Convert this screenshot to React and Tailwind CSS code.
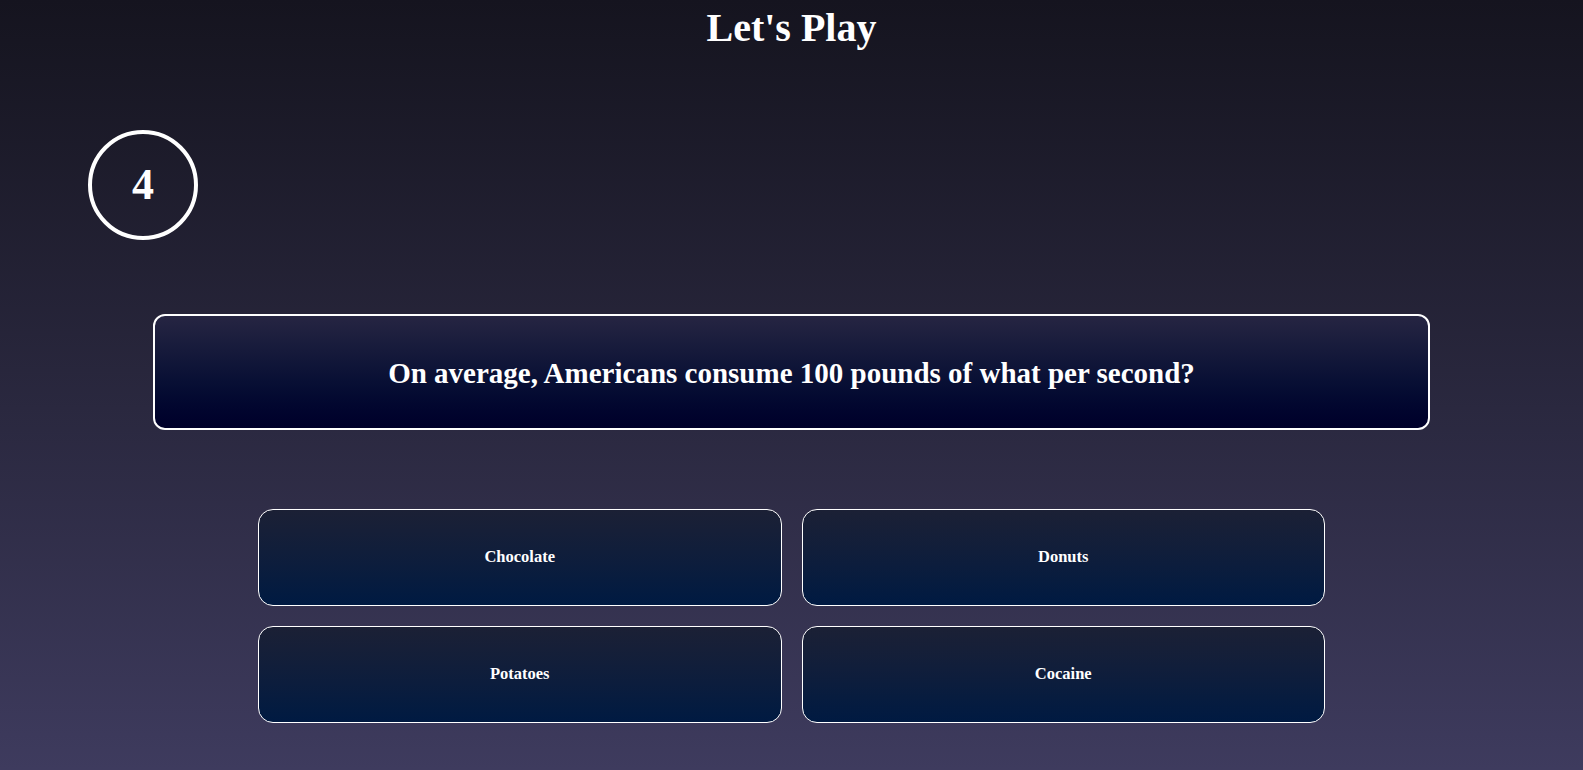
export default function App() {
  const answers = ["Chocolate", "Donuts", "Potatoes", "Cocaine"];
  return (
    <div
      className="min-h-screen w-full bg-gradient-to-b from-[#15141f] to-[#3e3b5e] text-white"
      style={{ fontFamily: '"Liberation Serif", "Times New Roman", serif' }}
    >
      <h1 className="text-center text-[40px] font-bold leading-[44px] pt-[6px]">Let's Play</h1>
      <div className="pl-[88px] pt-[80px]">
        <div className="w-[110px] h-[110px] rounded-full border-4 border-white flex items-center justify-center">
          <span className="text-[44px] font-bold leading-none">4</span>
        </div>
      </div>
      <div className="mx-[153px] mt-[74px] h-[116px] rounded-[12px] border-2 border-white bg-gradient-to-b from-[#262542] to-[#00002a] flex items-center justify-center">
        <h2 className="text-[29px] font-bold leading-none pt-[2px]">
          On average, Americans consume 100 pounds of what per second?
        </h2>
      </div>
      <div className="mx-auto mt-[79px] w-[1067px] grid grid-cols-2 gap-x-[20px] gap-y-[20px]">
        {answers.map((a) => (
          <button
            key={a}
            className="h-[97px] rounded-[15px] border border-white bg-gradient-to-b from-[#1b2035] to-[#001a42] flex items-center justify-center text-[16.5px] font-bold text-white"
            style={{ fontFamily: '"Liberation Serif", "Times New Roman", serif' }}
          >
            {a}
          </button>
        ))}
      </div>
    </div>
  );
}
